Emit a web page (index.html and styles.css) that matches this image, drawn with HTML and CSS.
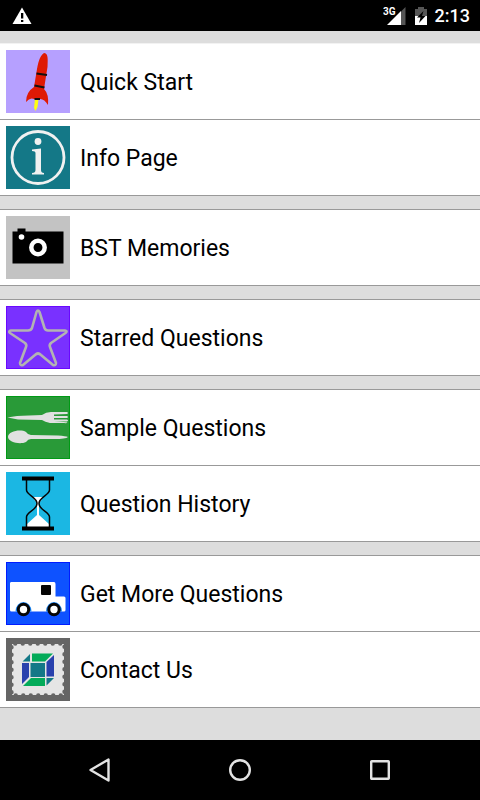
FILE: index.html
```html
<!DOCTYPE html>
<html lang="en">
<head>
<meta charset="utf-8">
<meta name="viewport" content="width=device-width, initial-scale=1">
<title>Menu</title>
<link rel="stylesheet" href="styles.css">
</head>
<body>
<header class="status">
  <svg class="warning" width="20" height="18" viewBox="0 0 20 18" aria-hidden="true"><path d="M10 0.5L19.5 17H0.5Z" fill="#fff"/><path d="M9 6h2.3v5.500H9zM9 13h2.300v2H9z" fill="#000"/></svg>
  <div class="indicators">
    <svg width="24" height="20" viewBox="0 0 24 20" role="img" aria-label="3G signal"><path d="M18 5.500L22.500 1V19H18z" fill="#555"/><path d="M18 5V19H4z" fill="#fff"/><text class="network" x="0" y="9">3G</text></svg>
    <svg width="12" height="20" viewBox="0 0 12 20" aria-hidden="true"><path d="M0 3h3V1h6v2h3v7H0z" fill="#555"/><path d="M0 10h12v9H0z" fill="#fff"/><path d="M8.500 5L2 11.500h3.500L4 17l6.500-7H7z" fill="#000"/></svg>
    <time class="clock">2:13</time>
  </div>
</header>
<main class="content">
  <nav class="menu">
    <div class="group">
      <a class="row" href="#quick-start">
        <svg class="icon" viewBox="0 0 64 63" aria-hidden="true"><rect width="64" height="63" fill="#b6a0ff"/><path d="M29 49L32.500 49L31.500 57L29.500 61L28 58Z" fill="#ffff13"/><path d="M38.500 3C42 4 42 8 41.500 17L38 39Q43 44 42 55Q38 48 33 49H28Q24 47 20 52Q20 42 28 37L31 19C32.500 10 35 4 38.500 3Z" fill="#df1905"/><path d="M30.500 23.500L41 25M28.500 35.500L38.500 37.500M28.500 49H34" stroke="#111" stroke-width="2"/></svg>
        <span class="label">Quick Start</span>
      </a>
      <a class="row" href="#info">
        <svg class="icon" viewBox="0 0 64 63" aria-hidden="true"><rect width="64" height="63" fill="#147887"/><circle cx="32" cy="31.500" r="26" fill="none" stroke="#f1f1f1" stroke-width="2.800"/><circle cx="32" cy="15.500" r="3.400" fill="#f1f1f1"/><path d="M26 23.500L35 22.500V44Q35 47 38 47V48.500H26V47Q29.500 47 29.500 44V27Q29.500 25 26 25Z" fill="#f1f1f1"/></svg>
        <span class="label">Info Page</span>
      </a>
    </div>
    <div class="group">
      <a class="row" href="#memories">
        <svg class="icon" viewBox="0 0 64 63" aria-hidden="true"><rect width="64" height="63" fill="#c3c3c3"/><path d="M6.500 15.500h5v-3h8v3h38v32h-51z"/><circle cx="15.500" cy="21" r="2.800" fill="#fff"/><circle cx="32" cy="31.500" r="6.700" fill="none" stroke="#fff" stroke-width="4.500"/></svg>
        <span class="label">BST Memories</span>
      </a>
    </div>
    <div class="group">
      <a class="row" href="#starred">
        <svg class="icon" viewBox="0 0 64 63" aria-hidden="true"><rect width="64" height="63" fill="#6a08ff"/><rect x="1" y="1" width="62" height="61" fill="#7931ff"/><path d="M30.500 6Q32 3 33.500 6L38.500 22Q39.500 24.500 42 24.500L59 24.500Q62 25 59.500 27L45 37Q43 39 44 41L50 57Q50 60 47 59L35 49Q32 46 29 49L17 59Q14 60 14 57L20 41Q21 39 19 37L4 27Q2 25 5 24.500L22 24.500Q25 24.500 26 22Z" fill="none" stroke="#b3b3b3" stroke-width="2.600" stroke-linejoin="round"/></svg>
        <span class="label">Starred Questions</span>
      </a>
    </div>
    <div class="group">
      <a class="row" href="#sample">
        <svg class="icon" viewBox="0 0 64 63" aria-hidden="true"><rect width="64" height="63" fill="#009a15"/><rect x="1" y="1" width="62" height="61" fill="#299a38"/><path d="M1.500 21.500Q10 19.500 23 19.500L36 19Q40 16 45 16H61Q63 17 61 18L48 18.500V20H61Q63 21 61 22H48V23.500H61Q63 24.500 61 25.500L48 25.500Q60 26 61.500 26.500Q61 27.500 58 27L44 27Q39 26 36 24L12 23.500ZM2 41C2 35 15 33 20 36Q22 39 25 39L52 39.500Q60 40 62 41Q60 43 48 43L25 43Q22 43 20 46C14 49 2 46 2 41Z" fill="#e1e1e1"/></svg>
        <span class="label">Sample Questions</span>
      </a>
      <a class="row" href="#history">
        <svg class="icon" viewBox="0 0 64 63" aria-hidden="true"><rect width="64" height="63" fill="#1bb7e3"/><path d="M27 25H37Q36 28 33 31V43L43 52V55H21V52L31 43V31Q28 28 27 25Z" fill="#fff"/><path d="M20.500 8V18C20.500 23 31 25 31 31.500S20.500 40 20.500 45V55M43.500 8V18C43.500 23 33 25 33 31.500S43.500 40 43.500 45V55" fill="none" stroke="#050505" stroke-width="1.500"/><path d="M16 4.500h32v4H16zM16 54.500h32v4H16z"/></svg>
        <span class="label">Question History</span>
      </a>
    </div>
    <div class="group">
      <a class="row" href="#more">
        <svg class="icon" viewBox="0 0 64 63" aria-hidden="true"><rect width="64" height="63" fill="#001cff"/><rect x="1" y="1" width="62" height="61" fill="#0e52ff"/><path d="M5 20H48Q49.500 20 49.500 22V34.500H58Q59.500 34.500 59.500 36V48Q59.500 49.500 58 49.500H5.500Q4 49.500 4 48V21.500Q4 20 5 20Z" fill="#fff"/><rect x="35" y="23" width="10" height="10" rx="1" fill="#050505"/><path d="M9.500 49.500a8 9.500 0 0 1 16 0zM40 49.500a8 9.500 0 0 1 16 0z" fill="#1680ef"/><circle cx="17.500" cy="47.500" r="5.200" fill="#fff" stroke="#050505" stroke-width="3"/><circle cx="48" cy="47.500" r="5.200" fill="#fff" stroke="#050505" stroke-width="3"/></svg>
        <span class="label">Get More Questions</span>
      </a>
      <a class="row" href="#contact">
        <svg class="icon" viewBox="0 0 64 63" aria-hidden="true"><rect width="64" height="63" fill="#656565"/><rect x="6" y="6" width="52" height="51" fill="#e5e5e5"/><path d="M5.500 5.500H58.500V57.500H5.500Z" fill="none" stroke="#656565" stroke-width="4.400" stroke-linecap="round" stroke-dasharray="0 7.500" stroke-dashoffset="3.750"/><path d="M26 15.500H47L39 23.500H26ZM25 40H39V48H17Z" fill="#03ab59"/><path d="M24 16V23.500H16.500ZM40.500 40H48L40.500 47.500Z" fill="#147887"/><path d="M24.500 25H39V39H24.500Z" fill="#147887"/><path d="M16 25H23V39L16 46ZM40.500 24L48 17V38.500H40.500Z" fill="#2941ad"/></svg>
        <span class="label">Contact Us</span>
      </a>
    </div>
  </nav>
</main>
<footer class="navbar">
  <button class="key" type="button" aria-label="Back"><svg width="24" height="24" viewBox="0 0 24 24"><path d="M20.500 1.500V22.500L2.500 12Z"/></svg></button>
  <button class="key" type="button" aria-label="Home"><svg width="24" height="24" viewBox="0 0 24 24"><circle cx="12" cy="12" r="9.800"/></svg></button>
  <button class="key" type="button" aria-label="Recent apps"><svg width="24" height="24" viewBox="0 0 24 24"><rect x="3.200" y="3.200" width="17.600" height="17.600" rx="0.500"/></svg></button>
</footer>
</body>
</html>
```
FILE: styles.css
```css
* {
  box-sizing: border-box;
}

body {
  margin: 0;
  min-height: 100vh;
  display: flex;
  flex-direction: column;
  background: #ddd;
  color: #000;
  font-family: Roboto, "Liberation Sans", sans-serif;
}

svg {
  display: block;
  flex: none;
}

.status {
  display: flex;
  align-items: center;
  justify-content: space-between;
  height: 31px;
  padding: 0 10px 0 12px;
  background: #000;
  color: #fff;
}

.indicators {
  display: flex;
  align-items: center;
  gap: 8px;
}

.network {
  fill: #fff;
  font-size: 10px;
  font-weight: 700;
}

.clock {
  font-size: 18px;
  font-weight: 500;
  line-height: 31px;
}

.content {
  flex: 1;
  padding-top: 12px;
}

.menu {
  display: flex;
  flex-direction: column;
  gap: 13px;
}

.group {
  border-top: 1px solid #999;
}

.group:first-child {
  border-top-color: #f2f2f2;
}

.row {
  display: flex;
  align-items: center;
  gap: 10px;
  padding: 6px;
  border-bottom: 1px solid #999;
  background: #fff;
  color: inherit;
  font-size: 23px;
  line-height: 28px;
  text-decoration: none;
}

.label {
  padding-top: 3px;
}

.icon {
  width: 64px;
  height: 63px;
}

.navbar {
  display: flex;
  justify-content: center;
  height: 60px;
  background: #000;
}

.key {
  display: flex;
  align-items: center;
  justify-content: center;
  width: 140px;
  padding: 0;
  border: 0;
  background: none;
}

.key svg {
  fill: none;
  stroke: #e3e3e3;
  stroke-width: 2.4;
  stroke-linejoin: round;
}
```
